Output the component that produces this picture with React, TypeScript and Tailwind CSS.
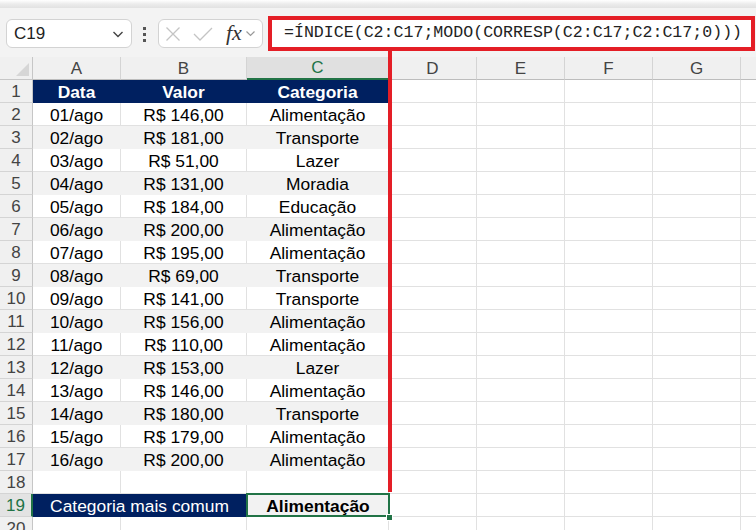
import React from "react";

const data: [string, string, string][] = [
  ["01/ago", "R$ 146,00", "Alimentação"],
  ["02/ago", "R$ 181,00", "Transporte"],
  ["03/ago", "R$ 51,00", "Lazer"],
  ["04/ago", "R$ 131,00", "Moradia"],
  ["05/ago", "R$ 184,00", "Educação"],
  ["06/ago", "R$ 200,00", "Alimentação"],
  ["07/ago", "R$ 195,00", "Alimentação"],
  ["08/ago", "R$ 69,00", "Transporte"],
  ["09/ago", "R$ 141,00", "Transporte"],
  ["10/ago", "R$ 156,00", "Alimentação"],
  ["11/ago", "R$ 110,00", "Alimentação"],
  ["12/ago", "R$ 153,00", "Lazer"],
  ["13/ago", "R$ 146,00", "Alimentação"],
  ["14/ago", "R$ 180,00", "Transporte"],
  ["15/ago", "R$ 179,00", "Alimentação"],
  ["16/ago", "R$ 200,00", "Alimentação"],
];

const emptyCols = ["w-[88px]", "w-[88px]", "w-[88px]", "w-[88px]", "w-[60px]"];

function RowHead({ n, selected }: { n: number; selected?: boolean }) {
  return (
    <div
      className={
        "w-[33px] shrink-0 h-full flex items-center justify-center text-[17px] pt-[2px] border-b border-[#d4d4d4] " +
        (selected
          ? "bg-[#e3e3e3] text-[#217346] border-r-2 border-r-[#217346]"
          : "bg-[#f0f0f0] text-[#444] border-r border-r-[#c6c6c6]")
      }
    >
      {n}
    </div>
  );
}

function EmptyRest() {
  return (
    <>
      {emptyCols.map((w, i) => (
        <div key={i} className={w + " shrink-0 h-full border-r border-b border-[#e1e1e1]"} />
      ))}
    </>
  );
}

function Cell({ w, children, cls }: { w: string; children?: React.ReactNode; cls: string }) {
  return (
    <div className={w + " shrink-0 h-full flex items-center justify-center pt-[2px] border-r border-b " + cls}>
      {children}
    </div>
  );
}

export default function App() {
  return (
    <div className="w-[756px] h-[530px] overflow-hidden bg-white relative font-['Liberation_Sans',Arial,sans-serif] text-black">
      {/* top shadow */}
      <div className="h-[8px] bg-gradient-to-b from-white via-[#ececec] to-[#e2e2e2]" />
      {/* toolbar */}
      <div className="h-[49px] bg-[#f3f3f3] flex items-start">
        <div className="ml-[6px] mt-[11px] w-[126px] h-[29px] bg-white border border-[#d3d3d3] rounded-[6px] flex items-center justify-between pl-[7px] pr-[6px]">
          <span className="text-[17px] text-[#222]">C19</span>
          <svg width="14" height="14" viewBox="0 0 14 14">
            <path d="M2.5 5 L7 9.5 L11.5 5" fill="none" stroke="#444" strokeWidth="1.4" />
          </svg>
        </div>
        <div className="ml-[11px] mt-[19px] flex flex-col gap-[3px]">
          <div className="w-[3px] h-[3px] bg-[#555]" />
          <div className="w-[3px] h-[3px] bg-[#555]" />
          <div className="w-[3px] h-[3px] bg-[#555]" />
        </div>
        <div className="ml-[12px] mt-[11px] w-[105px] h-[29px] bg-white border border-[#d3d3d3] rounded-[6px] flex items-center pl-[6px]">
          <svg width="16" height="16" viewBox="0 0 16 16">
            <path d="M1.5 1.5 L14.5 14.5 M14.5 1.5 L1.5 14.5" stroke="#c4c4c4" strokeWidth="1.3" fill="none" />
          </svg>
          <svg width="20" height="16" viewBox="0 0 20 16" className="ml-[12px]">
            <path d="M1 8 L7 14 L19 2" stroke="#c4c4c4" strokeWidth="1.3" fill="none" />
          </svg>
          <span className="ml-[13px] font-['Liberation_Serif',serif] italic text-[22px] leading-none text-[#333] -mt-[2px]">fx</span>
          <svg width="11" height="11" viewBox="0 0 11 11" className="ml-[3px]">
            <path d="M1.5 3.5 L5.5 7.5 L9.5 3.5" fill="none" stroke="#999" strokeWidth="1.2" />
          </svg>
        </div>
        <div className="ml-[5px] mt-[8px] w-[487px] h-[35px] bg-white border-4 border-[#e41e26] flex items-center pl-[12px]">
          <span className="font-['Liberation_Mono',monospace] text-[16.6px] text-[#222] whitespace-nowrap">
            =ÍNDICE(C2:C17;MODO(CORRESP(C2:C17;C2:C17;0)))
          </span>
        </div>
      </div>

      {/* column headers */}
      <div className="flex h-[23px] bg-[#f0f0f0] text-[17px] text-[#444]">
        <div className="w-[33px] shrink-0 h-full border-r border-b border-[#c6c6c6] relative">
          <svg className="absolute right-[3px] bottom-[3px]" width="13" height="13" viewBox="0 0 13 13">
            <path d="M13 0 L13 13 L0 13 Z" fill="#d6d6d6" />
          </svg>
        </div>
        {[
          ["A", "w-[88px]"],
          ["B", "w-[126px]"],
        ].map(([l, w]) => (
          <div key={l} className={w + " shrink-0 h-full flex items-center justify-center pt-[1px] border-r border-[#d4d4d4] border-b border-b-[#bdbdbd]"}>
            {l}
          </div>
        ))}
        <div className="w-[142px] shrink-0 h-full flex items-center justify-center pt-[1px] bg-[#e0e0e0] text-[#217346] border-r border-[#d4d4d4] border-b-2 border-b-[#217346]">
          C
        </div>
        {["D", "E", "F", "G", ""].map((l, i) => (
          <div key={i} className={emptyCols[i] + " shrink-0 h-full flex items-center justify-center pt-[1px] border-r border-[#d4d4d4] border-b border-b-[#bdbdbd]"}>
            {l}
          </div>
        ))}
      </div>

      {/* row 1 */}
      <div className="flex h-[23px] text-[17.4px]">
        <RowHead n={1} />
        <Cell w="w-[88px]" cls="bg-[#002060] border-[#002060] text-white font-bold">Data</Cell>
        <Cell w="w-[126px]" cls="bg-[#002060] border-[#002060] text-white font-bold">Valor</Cell>
        <Cell w="w-[142px]" cls="bg-[#002060] border-[#002060] text-white font-bold">Categoria</Cell>
        <EmptyRest />
      </div>

      {data.map((r, i) => {
        const n = i + 2;
        const gray = n % 2 === 1;
        const cls = gray ? "bg-[#f2f2f2] border-[#f2f2f2]" : "bg-white border-[#e1e1e1]";
        return (
          <div key={n} className="flex h-[23px] text-[17.4px]">
            <RowHead n={n} />
            <Cell w="w-[88px]" cls={cls}>{r[0]}</Cell>
            <Cell w="w-[126px]" cls={cls}>{r[1]}</Cell>
            <Cell w="w-[142px]" cls={cls}>{r[2]}</Cell>
            <EmptyRest />
          </div>
        );
      })}

      {/* row 18 */}
      <div className="flex h-[23px] text-[17.4px]">
        <RowHead n={18} />
        <Cell w="w-[88px]" cls="border-[#e1e1e1]" />
        <Cell w="w-[126px]" cls="border-[#e1e1e1]" />
        <Cell w="w-[142px]" cls="border-[#e1e1e1]" />
        <EmptyRest />
      </div>

      {/* row 19 */}
      <div className="flex h-[23px] text-[17.4px]">
        <RowHead n={19} selected />
        <Cell w="w-[214px]" cls="bg-[#002060] border-[#002060] text-white">Categoria mais comum</Cell>
        <div className="w-[142px] shrink-0 h-full relative bg-[#f2f2f2] flex items-center justify-center pt-[2px] font-bold">
          Alimentação
          <div className="absolute -left-[1px] -top-[1px] -right-[1px] bottom-0 border-2 border-[#217346]" />
          <div className="absolute -right-[4px] -bottom-[4px] w-[7px] h-[7px] bg-[#217346] border border-white" />
        </div>
        <EmptyRest />
      </div>

      {/* row 20 */}
      <div className="flex h-[23px] text-[17.4px]">
        <RowHead n={20} />
        <Cell w="w-[88px]" cls="border-[#e1e1e1]" />
        <Cell w="w-[126px]" cls="border-[#e1e1e1]" />
        <Cell w="w-[142px]" cls="border-[#e1e1e1]" />
        <EmptyRest />
      </div>

      {/* red annotation line */}
      <div className="absolute left-[388px] top-[50px] w-[4px] h-[442px] bg-[#e41e26]" />
    </div>
  );
}
